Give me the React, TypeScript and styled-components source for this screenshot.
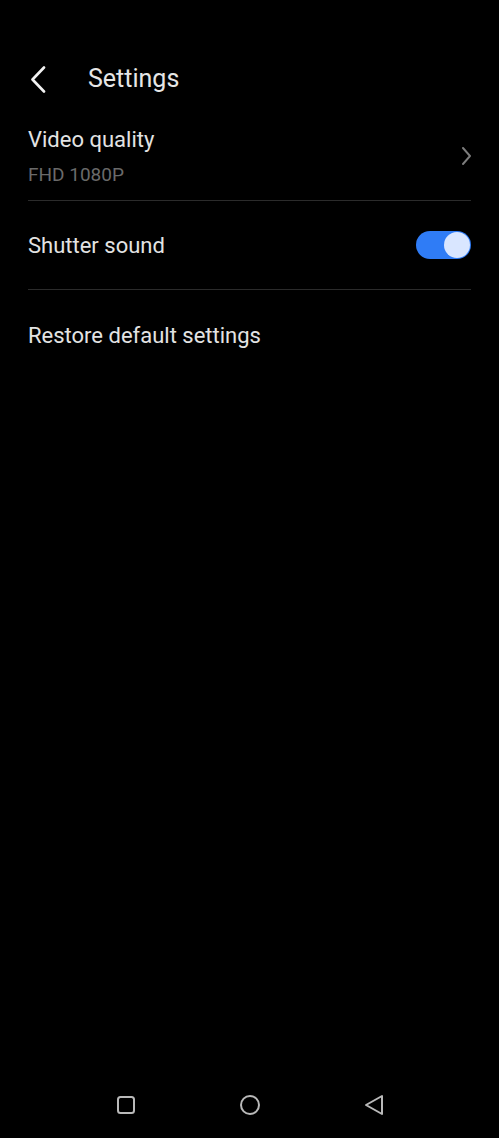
import * as React from 'react';
import styled, { createGlobalStyle } from 'styled-components';

const GlobalStyle = createGlobalStyle`
  html, body {
    margin: 0;
    padding: 0;
    background: #000;
  }
  body {
    font-family: Roboto, "Liberation Sans", sans-serif;
    -webkit-font-smoothing: antialiased;
  }
`;

const Page = styled.div`
  display: flex;
  flex-direction: column;
  min-height: 1138px;
  background: #000;
  color: #e3e3e3;
`;

const Header = styled.header`
  display: flex;
  align-items: center;
  height: 44px;
  margin-top: 57px;
  padding: 0 28px;
`;

const BackButton = styled.button`
  display: flex;
  align-items: center;
  width: 60px;
  height: 44px;
  padding: 0 0 0 2px;
  border: 0;
  background: none;
  cursor: pointer;
`;

const Title = styled.h1`
  margin: 0;
  font-size: 25px;
  font-weight: 400;
  line-height: 28px;
  color: #e6e6e6;
`;

const List = styled.div`
  display: flex;
  flex-direction: column;
  padding: 0 28px;
`;

const Row = styled.div<{ $height?: number; $last?: boolean }>`
  display: flex;
  align-items: center;
  justify-content: space-between;
  min-height: ${p => (p.$height ? `${p.$height}px` : 'auto')};
  border-bottom: ${p => (p.$last ? '0' : '1px solid #2b2b2b')};
`;

const TwoLineRow = styled(Row)`
  padding: 25px 0 13px;
`;

const TextBlock = styled.div`
  display: flex;
  flex-direction: column;
`;

const Label = styled.div`
  font-size: 22px;
  line-height: 27px;
  color: #e3e3e3;
`;

const Sub = styled.div`
  margin-top: 9px;
  font-size: 19px;
  line-height: 25px;
  color: #6a6a6a;
`;

const Chevron = styled.span`
  display: flex;
  margin-top: -2px;
`;

const Toggle = styled.button<{ $on: boolean }>`
  position: relative;
  width: 55px;
  height: 28px;
  padding: 0;
  border: 0;
  border-radius: 14px;
  background: ${p => (p.$on ? '#2f7cf6' : '#444')};
  cursor: pointer;

  &::after {
    content: '';
    position: absolute;
    top: 1px;
    left: ${p => (p.$on ? '28px' : '1px')};
    width: 26px;
    height: 26px;
    border-radius: 50%;
    background: #d9e6ff;
  }
`;

const NavBar = styled.nav`
  display: flex;
  justify-content: center;
  align-items: center;
  height: 50px;
  margin-top: auto;
  margin-bottom: 8px;
`;

const NavButton = styled.button`
  display: flex;
  justify-content: center;
  align-items: center;
  width: 124px;
  height: 50px;
  padding: 0;
  border: 0;
  background: none;
`;

export default function App() {
  const [sound, setSound] = React.useState(true);
  return (
    <Page>
      <GlobalStyle />
      <Header>
        <BackButton aria-label="Back">
          <svg width="16" height="27" viewBox="0 0 16 27">
            <path
              d="M14 1.5 L2.5 13.5 L14 25.5"
              fill="none"
              stroke="#f2f2f2"
              strokeWidth="2.6"
              strokeLinecap="round"
              strokeLinejoin="round"
            />
          </svg>
        </BackButton>
        <Title>Settings</Title>
      </Header>
      <List>
        <TwoLineRow>
          <TextBlock>
            <Label>Video quality</Label>
            <Sub>FHD 1080P</Sub>
          </TextBlock>
          <Chevron>
            <svg width="11" height="18" viewBox="0 0 11 18">
              <path
                d="M3 1 L10 9 L3 17"
                fill="none"
                stroke="#7d7d7d"
                strokeWidth="1.9"
                strokeLinecap="round"
                strokeLinejoin="round"
              />
            </svg>
          </Chevron>
        </TwoLineRow>
        <Row $height={88}>
          <Label>Shutter sound</Label>
          <Toggle $on={sound} onClick={() => setSound(!sound)} aria-label="Shutter sound" />
        </Row>
        <Row $height={90} $last>
          <Label>Restore default settings</Label>
        </Row>
      </List>
      <NavBar>
        <NavButton aria-label="Recents">
          <svg width="20" height="20" viewBox="0 0 20 20">
            <rect x="2" y="2" width="16" height="16" rx="2.5" fill="none" stroke="#b9b9b9" strokeWidth="2" />
          </svg>
        </NavButton>
        <NavButton aria-label="Home">
          <svg width="22" height="22" viewBox="0 0 22 22">
            <circle cx="11" cy="11" r="9" fill="none" stroke="#b9b9b9" strokeWidth="2" />
          </svg>
        </NavButton>
        <NavButton aria-label="Back">
          <svg width="20" height="22" viewBox="0 0 20 22">
            <path
              d="M2 11 L18 2 L18 20 Z"
              fill="none"
              stroke="#b9b9b9"
              strokeWidth="2"
              strokeLinejoin="round"
            />
          </svg>
        </NavButton>
      </NavBar>
    </Page>
  );
}
